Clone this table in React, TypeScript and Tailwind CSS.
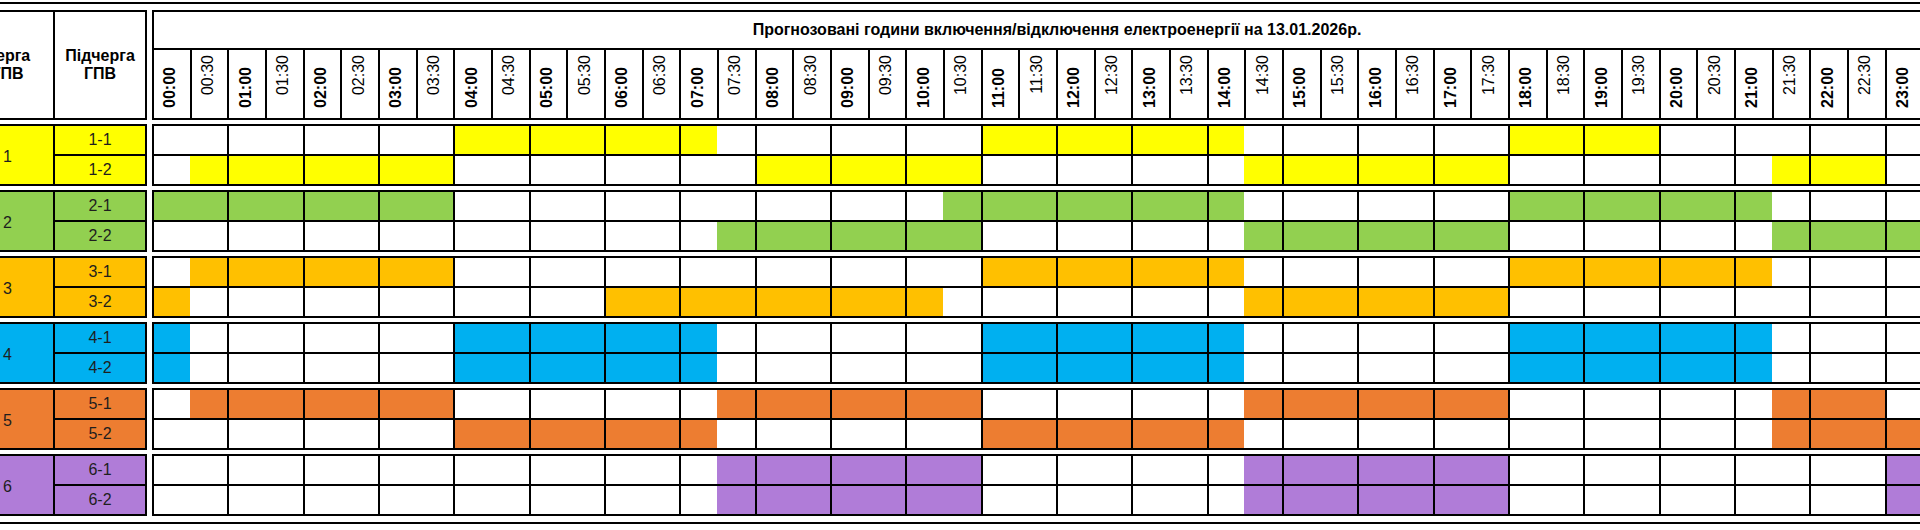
import clsx from "clsx";

type Sub = { id: string; off: [number, number][] };
type Group = { q: number; bg: string; subs: Sub[] };

// half-hour slots 0..47, ranges inclusive
const groups: Group[] = [
  {
    q: 1,
    bg: "bg-[#ffff00]",
    subs: [
      { id: "1-1", off: [[8, 14], [22, 28], [36, 39]] },
      { id: "1-2", off: [[1, 7], [16, 21], [29, 35], [43, 45]] },
    ],
  },
  {
    q: 2,
    bg: "bg-[#92d050]",
    subs: [
      { id: "2-1", off: [[0, 7], [21, 28], [36, 42]] },
      { id: "2-2", off: [[15, 21], [29, 35], [43, 47]] },
    ],
  },
  {
    q: 3,
    bg: "bg-[#ffc000]",
    subs: [
      { id: "3-1", off: [[1, 7], [22, 28], [36, 42]] },
      { id: "3-2", off: [[0, 0], [12, 20], [29, 35]] },
    ],
  },
  {
    q: 4,
    bg: "bg-[#00b0f0]",
    subs: [
      { id: "4-1", off: [[0, 0], [8, 14], [22, 28], [36, 42]] },
      { id: "4-2", off: [[0, 0], [8, 14], [22, 28], [36, 42]] },
    ],
  },
  {
    q: 5,
    bg: "bg-[#ed7d31]",
    subs: [
      { id: "5-1", off: [[1, 7], [15, 21], [29, 35], [43, 45]] },
      { id: "5-2", off: [[8, 14], [22, 28], [43, 47]] },
    ],
  },
  {
    q: 6,
    bg: "bg-[#b07cd8]",
    subs: [
      { id: "6-1", off: [[15, 21], [29, 35], [46, 47]] },
      { id: "6-2", off: [[15, 21], [29, 35], [46, 47]] },
    ],
  },
];

const slots = Array.from({ length: 48 }, (_, i) => i);

function label(i: number) {
  const h = String(Math.floor(i / 2)).padStart(2, "0");
  return `${h}:${i % 2 === 0 ? "00" : "30"}`;
}

function isOff(off: [number, number][], i: number) {
  return off.some(([a, b]) => i >= a && i <= b);
}

export default function App() {
  return (
    <div className="w-[1920px] h-[530px] overflow-hidden bg-white pt-[2px] font-['Liberation_Sans',Arial,sans-serif] text-black">
      <div className="border-y-2 border-black py-[6px]">
        <div className="ml-[-40px] flex w-max flex-col gap-[4px]">
          {/* header */}
          <div className="flex gap-[5px]">
            <div className="flex h-[110px] border-2 border-black text-[16px] font-bold leading-[18px]">
              <div className="flex w-[93px] items-center justify-center border-r-2 border-black text-center">
                Черга
                <br />
                ГПВ
              </div>
              <div className="flex w-[90px] items-center justify-center text-center">
                Підчерга
                <br />
                ГПВ
              </div>
            </div>
            <div className="flex h-[110px] w-[1810px] flex-col border-y-2 border-r-2 border-black">
              <div className="flex h-[38px] items-center justify-center border-b-2 border-l-2 border-black text-[16px] font-bold">
                Прогнозовані години включення/відключення електроенергії на 13.01.2026р.
              </div>
              <div className="grid flex-1 grid-cols-[repeat(48,minmax(0,1fr))]">
                {slots.map((i) => (
                  <div
                    key={i}
                    className={clsx(
                      "flex flex-col items-center border-l-2 border-black pr-[3px]",
                      i % 2 === 0 ? "justify-end pb-[10px]" : "justify-start pt-[5px]"
                    )}
                  >
                    <span
                      className={clsx(
                        "rotate-180 text-[16px] leading-[16px] [writing-mode:vertical-rl]",
                        i % 2 === 0 ? "font-bold" : "font-normal"
                      )}
                    >
                      {label(i)}
                    </span>
                  </div>
                ))}
              </div>
            </div>
          </div>

          {/* groups */}
          {groups.map((g) => (
            <div key={g.q} className="flex gap-[5px]">
              <div className={clsx("flex h-[62px] border-2 border-black text-[16px] leading-none text-[#1e1e1e]", g.bg)}>
                <div className="flex w-[93px] items-center justify-center border-r-2 border-black pt-[4px]">
                  {g.q}
                </div>
                <div className="flex w-[90px] flex-col">
                  {g.subs.map((s, k) => (
                    <div
                      key={s.id}
                      className={clsx(
                        "flex items-center justify-center",
                        k === 0 ? "h-[30px] border-b-2 border-black" : "h-[28px]"
                      )}
                    >
                      {s.id}
                    </div>
                  ))}
                </div>
              </div>
              <div className="flex h-[62px] w-[1810px] flex-col border-y-2 border-r-2 border-black">
                {g.subs.map((s, k) => (
                  <div
                    key={s.id}
                    className={clsx(
                      "grid grid-cols-[repeat(48,minmax(0,1fr))]",
                      k === 0 ? "h-[30px] border-b-2 border-black" : "h-[28px]"
                    )}
                  >
                    {slots.map((i) => (
                      <div
                        key={i}
                        className={clsx(
                          i % 2 === 0 && "border-l-2 border-black",
                          isOff(s.off, i) ? g.bg : "bg-white"
                        )}
                      />
                    ))}
                  </div>
                ))}
              </div>
            </div>
          ))}
        </div>
      </div>
    </div>
  );
}
